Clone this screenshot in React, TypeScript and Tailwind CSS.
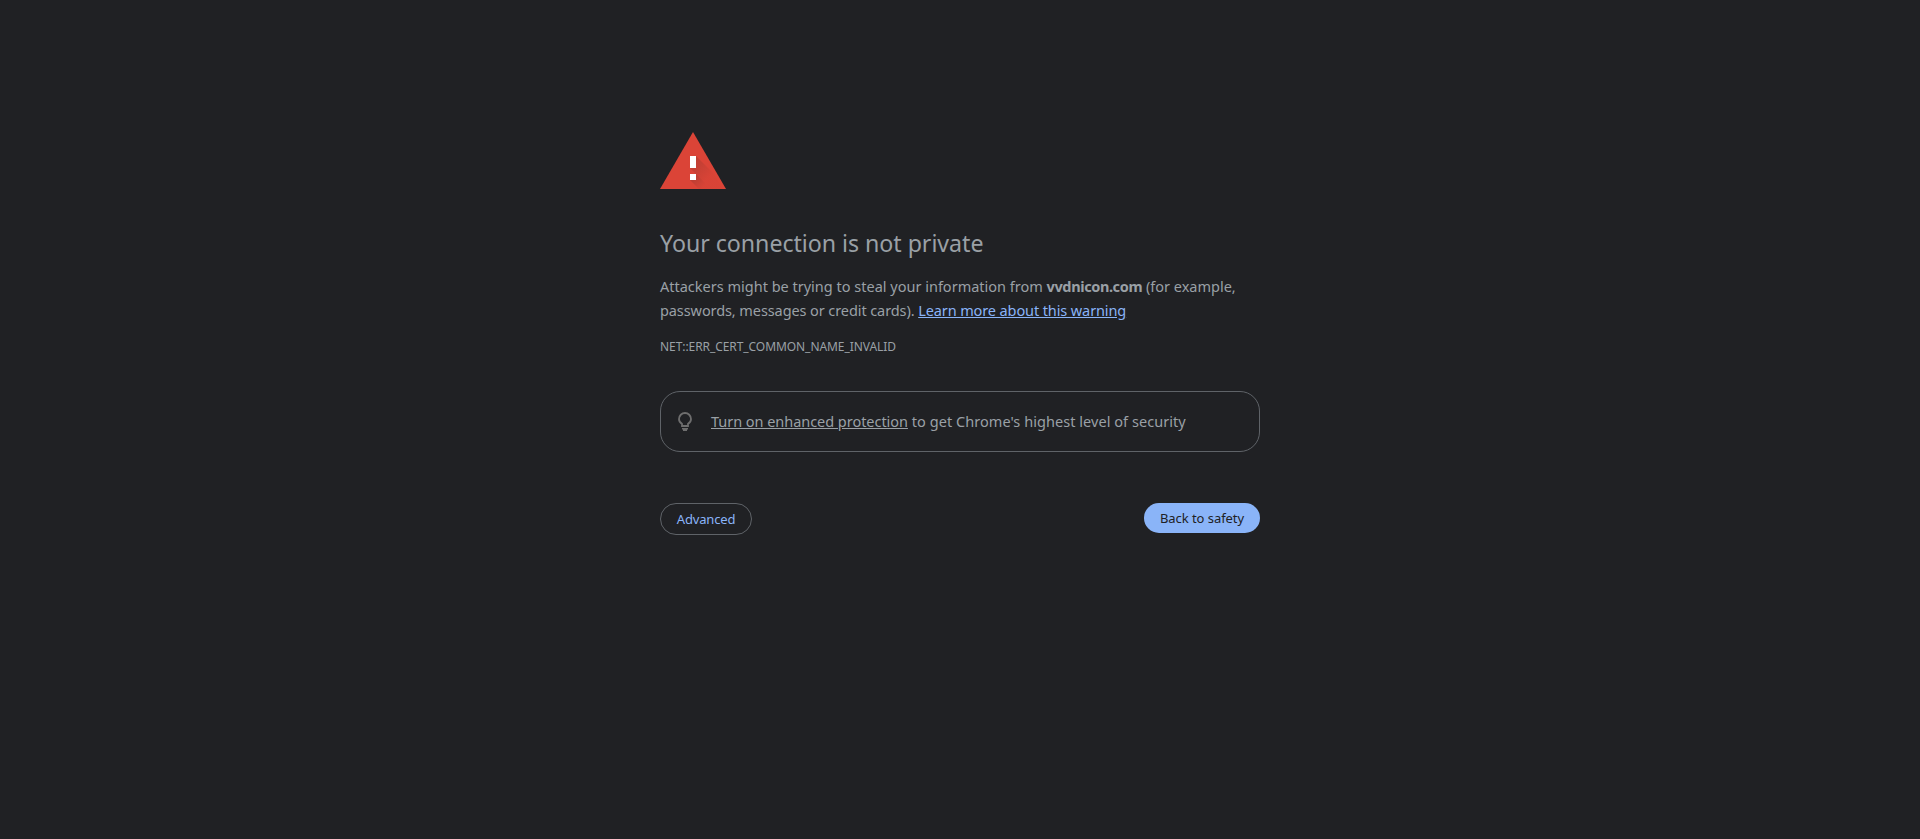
function WarningIcon() {
  return (
    <svg className="block h-[72px] w-[72px]" viewBox="0 0 72 72" aria-hidden="true">
      <defs>
        <linearGradient id="bar-shade" gradientUnits="userSpaceOnUse" x1="33" y1="42" x2="50" y2="59">
          <stop offset="0" stopColor="#3e2723" stopOpacity="0.2" />
          <stop offset="1" stopColor="#3e2723" stopOpacity="0.02" />
        </linearGradient>
        <linearGradient id="dot-shade" gradientUnits="userSpaceOnUse" x1="33" y1="60" x2="43" y2="70">
          <stop offset="0" stopColor="#3e2723" stopOpacity="0.22" />
          <stop offset="1" stopColor="#3e2723" stopOpacity="0.02" />
        </linearGradient>
      </defs>
      <path d="M0 72 33 15 66 72z" fill="#db4437" />
      <path d="M36 39 54 57 63 72H51L30 51H36z" fill="url(#bar-shade)" />
      <path d="M36 57 51 72H39L30 63z" fill="url(#dot-shade)" />
      <path d="M30 39h6v12h-6zM30 57h6v6h-6z" fill="#fff" />
    </svg>
  );
}

function BulbIcon() {
  return (
    <svg className="block h-6 w-6 shrink-0" viewBox="0 0 24 24" aria-hidden="true">
      <path
        d="M9 16V13.900C7.300 12.900 6 11.200 6 9a6 6 0 0 1 12 0c0 2.200-1.300 3.900-3 4.900V16z"
        fill="none"
        stroke="#6e6e6e"
        strokeWidth="1.800"
      />
      <path d="M9 18h6v1.500h-1V21h-4v-1.500H9z" fill="#6e6e6e" />
    </svg>
  );
}

export default function App() {
  return (
    <div className="min-h-screen bg-[#202124] pt-[117px] font-['Noto_Sans',sans-serif] text-[14.5px] leading-6 text-[#9aa0a6]">
      <main className="mx-auto w-[600px]">
        <WarningIcon />
        <h1 className="mt-[39px] text-[23.2px] leading-[30px] tracking-[-0.04px]">Your connection is not private</h1>
        <p className="mt-4 whitespace-nowrap">
          <span>Attackers might be trying to steal your information from </span>
          <strong className="font-bold tracking-[-0.39px]">vvdnicon.com</strong>
          <span> (for example,</span>
          <br />
          <span className="tracking-[-0.09px]">passwords, messages or credit cards). </span>
          <a href="#" className="tracking-[-0.11px] text-[#8ab4f8] underline">Learn more about this warning</a>
        </p>
        <p className="mt-[13px] text-xs leading-6 tracking-[-0.07px]">NET::ERR_CERT_COMMON_NAME_INVALID</p>
        <div className="mt-8 flex h-[61px] items-center gap-[14px] rounded-[20px] border border-[#5f6368] pl-3">
          <BulbIcon />
          <p className="pb-px whitespace-nowrap">
            <a href="#" className="tracking-[-0.04px] underline">Turn on enhanced protection</a>
            <span className="tracking-[0.05px]"> to get Chrome's highest level of security</span>
          </p>
        </div>
        <div className="mt-[51px] flex items-start justify-between text-[13px]">
          <button className="h-8 w-[92px] rounded-full border border-[#5f6368] tracking-[-0.16px] text-[#8ab4f8]">Advanced</button>
          <button className="h-[30px] w-[116px] rounded-full bg-[#8ab4f8] tracking-[-0.06px] text-[#202124]">Back to safety</button>
        </div>
      </main>
    </div>
  );
}
